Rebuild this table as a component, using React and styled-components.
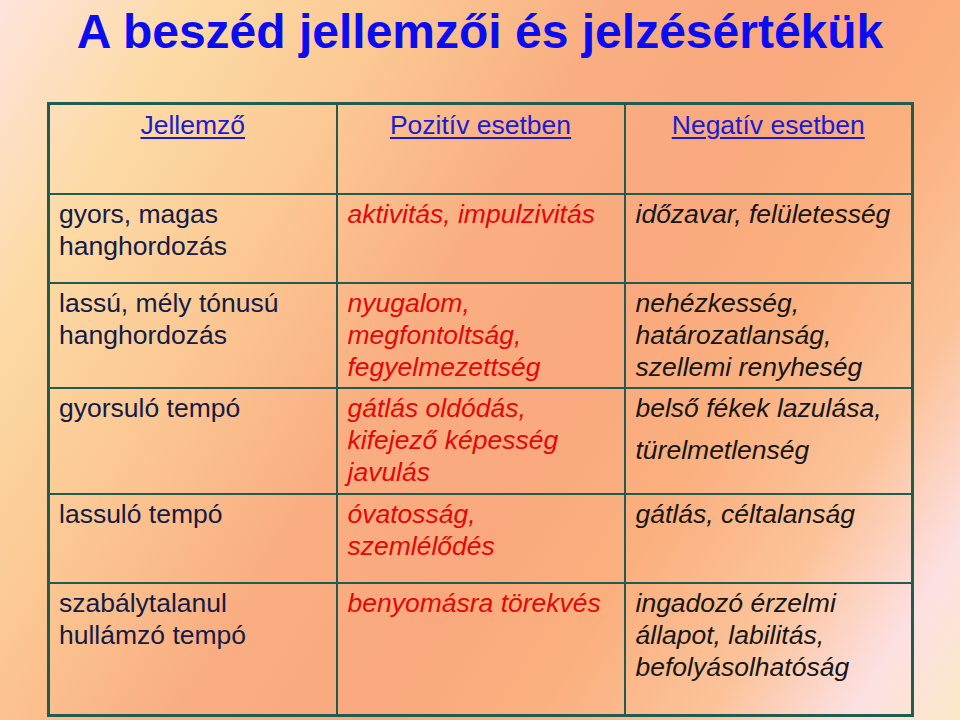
import React from "react";
import styled, { createGlobalStyle } from "styled-components";

const GlobalStyle = createGlobalStyle`
  html, body {
    margin: 0;
    padding: 0;
  }
  body {
    font-family: "Liberation Sans", Arial, sans-serif;
  }
`;

const rows = [
  {
    h: 89,
    trait: ["gyors, magas", "hanghordozás"],
    pos: ["aktivitás, impulzivitás"],
    neg: ["időzavar, felületesség"],
  },
  {
    h: 105,
    trait: ["lassú, mély tónusú", "hanghordozás"],
    pos: ["nyugalom,", "megfontoltság,", "fegyelmezettség"],
    neg: ["nehézkesség,", "határozatlanság,", "szellemi renyheség"],
  },
  {
    h: 106,
    trait: ["gyorsuló tempó"],
    pos: ["gátlás oldódás,", "kifejező képesség", "javulás"],
    neg: ["belső fékek lazulása,", "türelmetlenség"],
    negGap: 10,
  },
  {
    h: 89,
    trait: ["lassuló tempó"],
    pos: ["óvatosság,", "szemlélődés"],
    neg: ["gátlás, céltalanság"],
  },
  {
    h: 133,
    trait: ["szabálytalanul", "hullámzó tempó"],
    pos: ["benyomásra törekvés"],
    neg: ["ingadozó érzelmi", "állapot, labilitás,", "befolyásolhatóság"],
  },
];

const App = () => {
  return (
    <Slide>
      <GlobalStyle />
      <Title>A beszéd jellemzői és jelzésértékük</Title>
      <Table>
        <colgroup>
          <col style={{ width: 288 }} />
          <col style={{ width: 288 }} />
          <col style={{ width: 288 }} />
        </colgroup>
        <tbody>
          <Row $h={90}>
            <HeadCell>
              <HeadLink>Jellemző</HeadLink>
            </HeadCell>
            <HeadCell>
              <HeadLink>Pozitív esetben</HeadLink>
            </HeadCell>
            <HeadCell>
              <HeadLink>Negatív esetben</HeadLink>
            </HeadCell>
          </Row>
          {rows.map((r, i) => (
            <Row key={i} $h={r.h}>
              <Cell $first>
                <Lines>
                  {r.trait.map((t) => (
                    <Line key={t} $tone="trait">{t}</Line>
                  ))}
                </Lines>
              </Cell>
              <Cell>
                <Lines>
                  {r.pos.map((t) => (
                    <Line key={t} $tone="pos">{t}</Line>
                  ))}
                </Lines>
              </Cell>
              <Cell>
                <Lines $gap={r.negGap}>
                  {r.neg.map((t) => (
                    <Line key={t} $tone="neg">{t}</Line>
                  ))}
                </Lines>
              </Cell>
            </Row>
          ))}
        </tbody>
      </Table>
    </Slide>
  );
};

export default App;

// whole slide with the warm diagonal background
const Slide = styled.div`
  width: 960px;
  height: 720px;
  box-sizing: border-box;
  padding: 4px 0 0 47px;
  overflow: hidden;
  background: linear-gradient(
    122deg,
    #fde4dc 0%,
    #fddba6 14%,
    #fcc994 28%,
    #f9ae82 44%,
    #f9a97d 58%,
    #fbb07f 70%,
    #fcc39a 82%,
    #fde0e2 92%,
    #fbe8c8 100%
  );
`;

const Title = styled.h1`
  margin: 0 0 43px -47px;
  font-family: "Liberation Sans", Arial, sans-serif;
  font-weight: bold;
  font-size: 48px;
  line-height: 55px;
  text-align: center;
  color: #0c0cf0;
`;

const Table = styled.table`
  width: 864px;
  table-layout: fixed;
  border-collapse: collapse;
  border: 3px solid #1f5c52;
`;

const Row = styled.tr`
  height: ${(p) => p.$h}px;
`;

const HeadCell = styled.td`
  border: 2px solid #1f5c52;
  vertical-align: top;
  text-align: center;
  padding: 4px 0 0;
`;

const HeadLink = styled.span`
  font-size: 26.5px;
  line-height: 32px;
  color: #1b1bd2;
  text-decoration: underline;
  text-underline-offset: 3px;
  text-decoration-thickness: 2px;
`;

const Cell = styled.td`
  border: 2px solid #1f5c52;
  vertical-align: top;
  padding: 3px 8px 0 ${(p) => (p.$first ? "9px" : "10px")};
`;

const Lines = styled.div`
  display: flex;
  flex-direction: column;
  gap: ${(p) => p.$gap || 0}px;
`;

const tones = {
  trait: { color: "#141b44", style: "normal" },
  pos: { color: "#e30808", style: "italic" },
  neg: { color: "#161616", style: "italic" },
};

const Line = styled.div`
  font-size: 26.5px;
  line-height: 32px;
  white-space: nowrap;
  color: ${(p) => tones[p.$tone].color};
  font-style: ${(p) => tones[p.$tone].style};
`;
